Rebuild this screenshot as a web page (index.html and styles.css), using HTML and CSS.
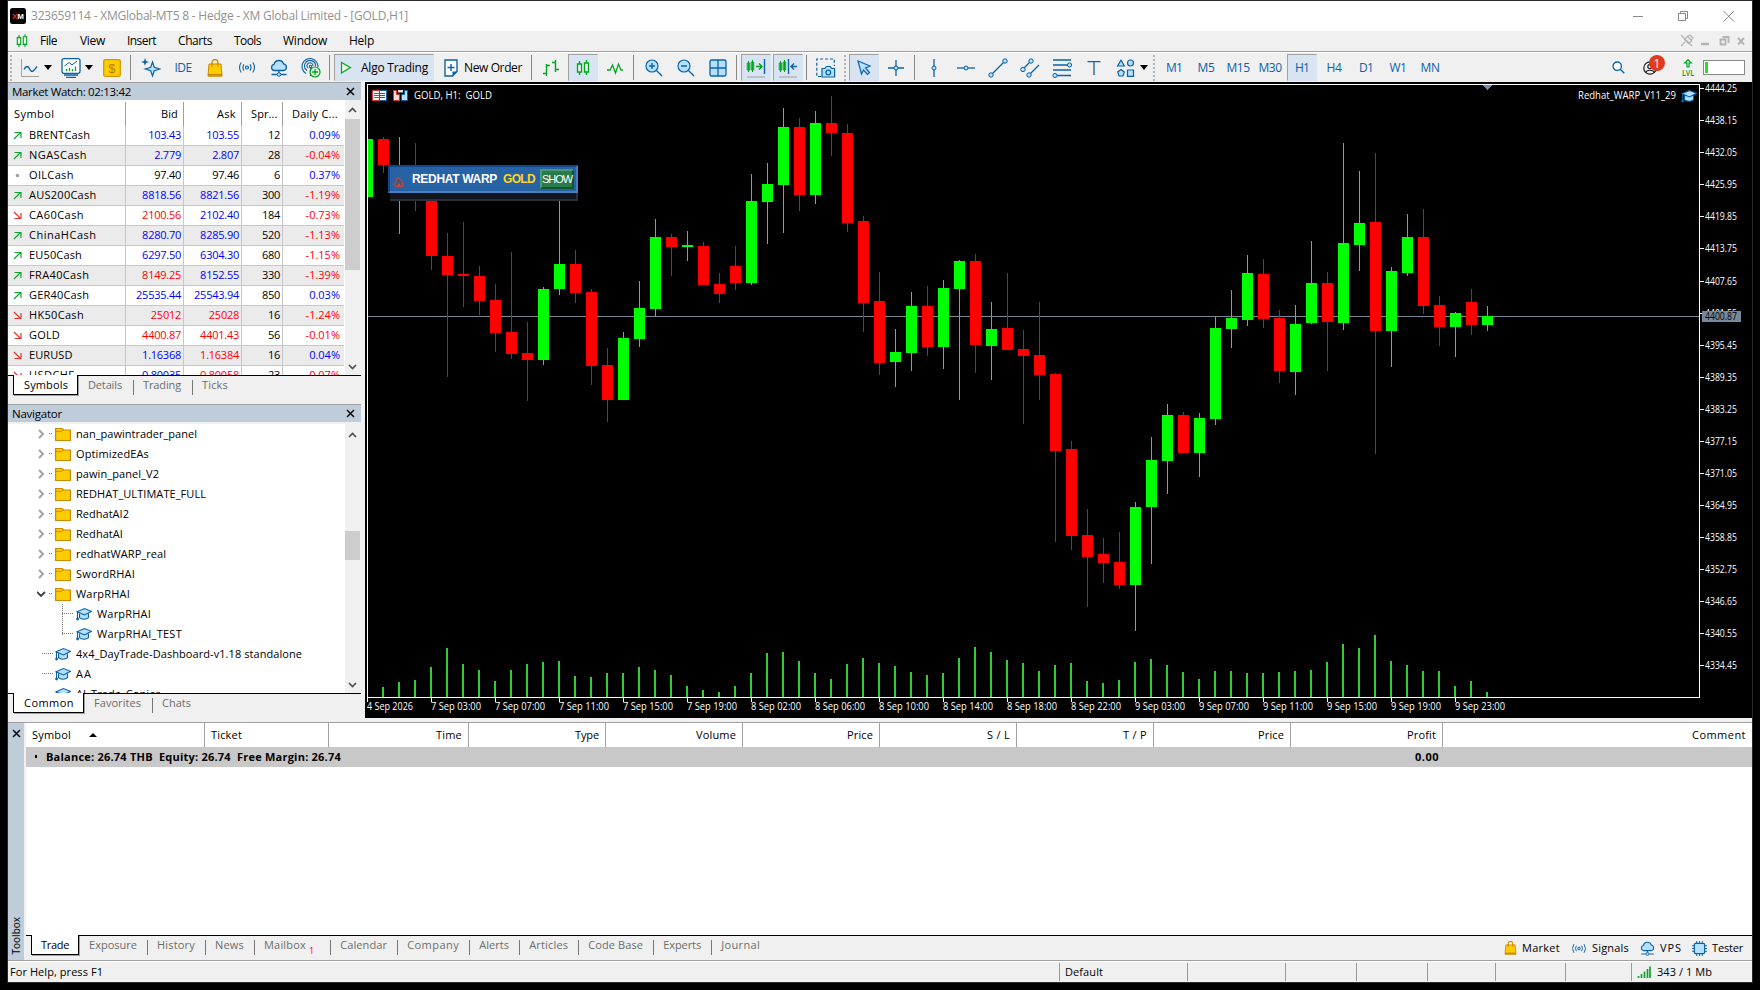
FILE: index.html
```html
<!DOCTYPE html>
<html lang="en">
<head>
<meta charset="utf-8">
<title>XMGlobal-MT5 8 - [GOLD,H1]</title>
<link rel="stylesheet" href="styles.css">
</head>
<body>
<svg class="defs" width="0" height="0">
  <symbol id="cap" viewBox="0 0 16 14"><path d="M3.500 6.500v4.200c2 2 7 2 9 0V6.500" fill="#b5e0ff" stroke="#0b62a8" stroke-width="1.100"/><path d="M1 4.800 8.500 1.500 15.500 4.300 8.500 8z" fill="#b5e0ff" stroke="#0b62a8" stroke-width="1.100"/><path d="M1.500 5v6.500" stroke="#0b62a8" stroke-width="1.100"/><circle cx="1.600" cy="12" r="1.400" fill="#0b62a8"/></symbol>
  <symbol id="folder" viewBox="0 0 16 14"><path d="M.600 1.500h6.500l1.500 1.500h6.800v10.500H.600z" fill="#fc0" stroke="#c98a00" stroke-width="1.200"/><path d="M.600 4.300h6.200l1.400-1.300" fill="none" stroke="#c98a00"/></symbol>
  <symbol id="bag" viewBox="0 0 16 18"><path d="M5 7V3.500a3 3 0 0 1 6 0V7" fill="none" stroke="#c98a00" stroke-width="1.300"/><path d="M2 5h12l1 12.200H1z" fill="#fc0" stroke="#c98a00" stroke-width="1"/><path d="M1.200 15.800h13.600" stroke="#c98a00" stroke-width="1.800"/><path d="M5 8V4M11 8V4" stroke="#c98a00"/></symbol>
  <symbol id="signal" viewBox="0 0 20 14"><g fill="none" stroke="#0b62a8" stroke-width="1.200"><circle cx="10" cy="7" r="1.700" fill="#b5e0ff"/><path d="M6.700 3.500q-2.400 3.500 0 7M13.300 3.500q2.400 3.500 0 7M3.600 1.500q-3.800 5.500 0 11M16.400 1.500q3.800 5.500 0 11"/></g></symbol>
  <symbol id="cloud" viewBox="0 0 18 18"><path d="M4 11.500a3.200 3.200 0 0 1 0-6.200 5 5 0 0 1 9.600-.4 3.400 3.400 0 0 1 .4 6.600z" fill="#b5e0ff" stroke="#0b62a8" stroke-width="1.300"/><path d="M9 11.500v3M1.500 15.500h5.500M11 15.500h5.500" stroke="#0b62a8" stroke-width="1.300"/><circle cx="9" cy="15.500" r="1.800" fill="#b5e0ff" stroke="#0b62a8"/></symbol>
  <symbol id="candles" viewBox="0 0 14 16"><path d="M3.500 1v3M3.500 12v3M10.500 0v3M10.500 12v3" stroke="#00a321" stroke-width="1.300"/><path d="M1.500 4h4v8h-4zM8.500 3h4v9h-4z" fill="#e4f8e0" stroke="#00a321" stroke-width="1.300"/></symbol>
</svg>
<div class="window">
  <header class="titlebar">
    <svg class="logo" width="16" height="16" viewBox="0 0 16 16"><rect width="16" height="16" rx="2.500"/><text x="2" y="11" textLength="12" lengthAdjust="spacingAndGlyphs" class="logotext"><tspan fill="#e22">X</tspan>M</text></svg>
    <span class="title" data-w="377">323659114 - XMGlobal-MT5 8 - Hedge - XM Global Limited - [GOLD,H1]</span>
    <svg class="winbtns" width="104" height="14" viewBox="0 0 104 14"><g fill="none" stroke="#888"><path d="M1 7.500h10M46.500 4.500h7v7h-7zM48.500 4V2.500h7v7H54M91.500 2l10.500 10.500M102 2 91.500 12.500"/></g></svg>
  </header>
  <nav class="menubar">
    <svg class="menuicon" width="12" height="14"><use href="#candles"/></svg>
    <span class="m1" data-w="17">File</span><span class="m2" data-w="25">View</span><span class="m3" data-w="29">Insert</span><span class="m4" data-w="34">Charts</span><span class="m5" data-w="27">Tools</span><span class="m6" data-w="44">Window</span><span class="m7" data-w="25">Help</span>
    <svg class="mdibtns" width="68" height="14" viewBox="0 0 68 14"><g fill="none" stroke="#b3b3b3"><path d="M1 1l11 11M1 12l4-4M4 5l5 5M7 2l5 5M5 5l3-3M9 9l3-2M8 2l2-1 3 3-2 2" stroke-width="1.200"/><path d="M21 10h8" stroke-width="2.400"/><path d="M40.500 5.500h5v5h-5zM42.500 3h6v6" stroke-width="1.800"/><path d="M58 4l6 6.500M64 4l-6 6.500" stroke-width="2"/></g></svg>
  </nav>
  <div class="toolbar">
    <i class="grip first"></i>
    <div class="drop"><svg width="20" height="20" viewBox="0 0 20 20"><path d="M1.500 1v17.500H19" fill="none" stroke="#a0a0a0"/><path d="M4 11.500c2-4 4-4 6 0s4 1 7-3" fill="none" stroke="#0b62a8" stroke-width="1.400"/></svg><b class="caret"></b></div>
    <div class="drop"><svg width="20" height="20" viewBox="0 0 20 20"><rect x="1" y=".7" width="18" height="14.600" rx="2" fill="#fff" stroke="#0b62a8" stroke-width="1.300"/><path d="M3.500 8 8 4.500l3 2.500 5-4" fill="none" stroke="#0b62a8"/><path d="M5.500 13v-2M8.500 13v-3M11.500 13v-2M14.500 13V8.500" stroke="#00a321" stroke-width="1.300"/><path d="M3 17h14M5 19.300h10" stroke="#0b62a8" stroke-width="1.300"/></svg><b class="caret"></b></div>
    <div class="btn"><svg width="18" height="18" viewBox="0 0 18 18"><rect x=".7" y=".7" width="16.600" height="16.600" rx="1.500" fill="#fc0" stroke="#d29a00" stroke-width="1.300"/><text x="5.200" y="14" class="dollar">$</text></svg></div>
    <i class="sep gap"></i>
    <div class="btn"><svg width="20" height="20" viewBox="0 0 20 20"><path d="M11.500 4 13.300 9.200 18.800 11 13.300 12.800 11.500 18 9.700 12.800 4.200 11 9.700 9.200z" fill="#b5e0ff" stroke="#0b62a8" stroke-width="1.200"/><path d="M4 0l1 3 3 1-3 1-1 3-1-3-3-1 3-1z" fill="#0b62a8"/></svg></div>
    <div class="btn blue"><span data-w="17">IDE</span></div>
    <div class="btn"><svg width="16" height="18"><use href="#bag"/></svg></div>
    <div class="btn"><svg width="18" height="13"><use href="#signal"/></svg></div>
    <div class="btn"><svg width="18" height="18"><use href="#cloud"/></svg></div>
    <div class="btn"><svg width="20" height="20" viewBox="0 0 20 20"><g fill="none" stroke="#0b62a8" stroke-width="1.100"><path d="M5 15.500A8 8 0 1 1 17 9M6 12.500a5.500 5.500 0 1 1 8.500-4M7 10a3 3 0 1 1 5-2"/><circle cx="9.500" cy="8.500" r="1.200"/><path d="M9.500 9v9"/></g><circle cx="14" cy="14" r="5" fill="#e6f9e4" stroke="#00a321" stroke-width="1.200"/><path d="M14 11v6M11 14h6" stroke="#00a321" stroke-width="1.300"/></svg></div>
    <i class="sep"></i>
    <div class="btn algo on"><svg width="12" height="14" viewBox="0 0 12 14"><path d="M1.500 1.500 10.500 6.500 1.500 12z" fill="#e6f9e4" stroke="#00a321" stroke-width="1.200"/></svg><span data-w="67">Algo Trading</span></div>
    <div class="btn neworder"><svg width="14" height="18" viewBox="0 0 14 18"><path d="M1 1h12v11.500L8.500 17H1z" fill="#fff" stroke="#0b62a8" stroke-width="1.400"/><path d="M13 12.500H8.500V17z" fill="#0b62a8"/><path d="M7 5v7M3.500 8.500h7" stroke="#0b62a8" stroke-width="1.400"/></svg><span data-w="58">New Order</span></div>
    <i class="sep"></i>
    <div class="btn"><svg width="18" height="18" viewBox="0 0 18 18"><path d="M4.500 5v12M1 14.500h3.500M4.500 6.500H8M13.500 1v12M10 3.500h3.500M13.500 10.500H17" stroke="#00a321" stroke-width="1.400"/></svg></div>
    <div class="btn on"><svg width="14" height="16"><use href="#candles"/></svg></div>
    <div class="btn"><svg width="18" height="14" viewBox="0 0 18 14"><path d="M1 9h3l2.500-5 3 8 3-9 2.500 6h2" fill="none" stroke="#00a321" stroke-width="1.300"/></svg></div>
    <i class="sep gap"></i>
    <div class="btn"><svg width="18" height="18" viewBox="0 0 18 18"><circle cx="7" cy="7" r="6" fill="#b5e0ff" stroke="#0b62a8" stroke-width="1.200"/><path d="M11.500 11.500 17 17M4 7h6M7 4v6" stroke="#0b62a8" stroke-width="1.400"/></svg></div>
    <div class="btn"><svg width="18" height="18" viewBox="0 0 18 18"><circle cx="7" cy="7" r="6" fill="#b5e0ff" stroke="#0b62a8" stroke-width="1.200"/><path d="M11.500 11.500 17 17M4 7h6" stroke="#0b62a8" stroke-width="1.400"/></svg></div>
    <div class="btn"><svg width="18" height="18" viewBox="0 0 18 18"><rect x="1" y="1" width="16" height="16" rx="1.500" fill="#b5e0ff" stroke="#0b62a8" stroke-width="1.300"/><path d="M9 1v16M1 9h16" stroke="#0b62a8" stroke-width="1.300"/></svg></div>
    <i class="sep"></i>
    <div class="btn on"><svg width="20" height="20" viewBox="0 0 20 20"><path d="M2.500 3v11M6.500 2v12M1.300 5h2.400v7H1.300zM5.300 4h2.400v8H5.300z" fill="#e4f8e0" stroke="#00a321"/><path d="M10 8.500h6M13 5.500l3 3-3 3" fill="none" stroke="#00a321" stroke-width="1.400"/><path d="M18.500 1v15" stroke="#0b62a8" stroke-width="1.400"/><path d="M1 19h18" stroke="#a0a0a0"/></svg></div>
    <div class="btn on"><svg width="20" height="20" viewBox="0 0 20 20"><path d="M2.500 3v11M6.500 2v12M1.300 5h2.400v7H1.300zM5.300 4h2.400v8H5.300z" fill="#e4f8e0" stroke="#00a321"/><path d="M10.500 1v15M13 8.500h6M16 5.500l-3 3 3 3" fill="none" stroke="#0b62a8" stroke-width="1.400"/><path d="M1 19h18" stroke="#a0a0a0"/></svg></div>
    <i class="sep"></i>
    <div class="btn"><svg width="20" height="20" viewBox="0 0 20 20"><path d="M5 18.500H.800V1h17.500v7" fill="none" stroke="#0b62a8" stroke-width="1.200" stroke-dasharray="3 2"/><path d="M6 10.500h3l1.300-2h4l1.300 2h3v8.500H6z" fill="#b5e0ff" stroke="#0b62a8" stroke-width="1.200"/><circle cx="12.300" cy="14.500" r="2.300" fill="#b5e0ff" stroke="#0b62a8" stroke-width="1.300"/></svg></div>
    <i class="grip"></i>
    <div class="btn on"><svg width="18" height="18" viewBox="0 0 18 18"><path d="M3 2l12 5-4.500 2 4 4.500-2 2-4-4.500L6.500 15z" fill="#b5e0ff" stroke="#0b62a8" stroke-width="1.200"/></svg></div>
    <div class="btn"><svg width="18" height="18" viewBox="0 0 18 18"><path d="M9 1v16M1 9h16" stroke="#0b62a8" stroke-width="1.300"/><circle cx="9" cy="9" r="2" fill="#b5e0ff" stroke="#0b62a8"/></svg></div>
    <i class="sep"></i>
    <div class="btn"><svg width="18" height="18" viewBox="0 0 18 18"><path d="M9 0v18" stroke="#0b62a8" stroke-width="1.300"/><circle cx="9" cy="9" r="2" fill="#b5e0ff" stroke="#0b62a8"/></svg></div>
    <div class="btn"><svg width="20" height="18" viewBox="0 0 20 18"><path d="M1 9h18" stroke="#0b62a8" stroke-width="1.300"/><circle cx="10" cy="9" r="2" fill="#b5e0ff" stroke="#0b62a8"/></svg></div>
    <div class="btn"><svg width="20" height="20" viewBox="0 0 20 20"><path d="M3 17 17 3" stroke="#0b62a8" stroke-width="1.300"/><g fill="#b5e0ff" stroke="#0b62a8"><circle cx="3" cy="17" r="2.200"/><circle cx="17" cy="3" r="2.200"/></g></svg></div>
    <div class="btn"><svg width="20" height="20" viewBox="0 0 20 20"><path d="M3 11l8-8M9 17 19 7" stroke="#0b62a8" stroke-width="1.300"/><g fill="#b5e0ff" stroke="#0b62a8"><circle cx="3" cy="11.500" r="2.200"/><circle cx="11" cy="3" r="2.200"/><circle cx="9" cy="17" r="2.200"/></g></svg></div>
    <div class="btn"><svg width="20" height="20" viewBox="0 0 20 20"><path d="M1 2h18M1 7h16M1 12h18M3 17.500h16" stroke="#0b62a8" stroke-width="1.300"/><g fill="#b5e0ff" stroke="#0b62a8"><circle cx="17.500" cy="7" r="2.100"/><circle cx="3" cy="17.500" r="2.100"/></g></svg></div>
    <div class="btn"><svg width="14" height="16" viewBox="0 0 14 16"><path d="M.500 1.700h13M7 1.700V15" stroke="#0b62a8" stroke-width="1.300"/></svg></div>
    <div class="drop"><svg width="20" height="20" viewBox="0 0 20 20"><g fill="#b5e0ff" stroke="#0b62a8" stroke-width="1.200"><path d="M5 2.200 8.400 8H1.600zM11.500 12h6v6.300h-6z"/><circle cx="14.500" cy="5" r="3"/><path d="M5 11.500 8.300 14 7 18H3L1.700 14z"/></g></svg><b class="caret"></b></div>
    <i class="grip wide"></i>
    <div class="btn blue"><span data-w="16">M1</span></div><div class="btn blue"><span data-w="17">M5</span></div><div class="btn blue"><span data-w="23">M15</span></div><div class="btn blue"><span data-w="23">M30</span></div><div class="btn blue on"><span data-w="14">H1</span></div><div class="btn blue"><span data-w="15">H4</span></div><div class="btn blue"><span data-w="14">D1</span></div><div class="btn blue"><span data-w="17">W1</span></div><div class="btn blue"><span data-w="19">MN</span></div>
    <div class="tray">
      <svg width="13" height="13" viewBox="0 0 13 13"><circle cx="5.200" cy="5.200" r="4.200" fill="#fff" stroke="#0b62a8" stroke-width="1.300"/><path d="M8.300 8.300 12.300 12.300" stroke="#0b62a8" stroke-width="1.300"/></svg>
      <div class="user"><svg width="14" height="14" viewBox="0 0 14 14"><g fill="none" stroke="#222" stroke-width="1.200"><circle cx="7" cy="7" r="6.200"/><circle cx="7" cy="5.500" r="2.200"/><path d="M2.800 11.500c1-3 7.400-3 8.400 0"/></g></svg><span class="badge">1</span></div>
      <svg class="lvl" width="14" height="18" viewBox="0 0 14 18"><path d="M7 .800 10.300 4H8v4H6V4H3.700z" fill="#e4f8e0" stroke="#00a321" stroke-width="1.200"/><text x="1" y="17" textLength="12" lengthAdjust="spacingAndGlyphs" class="lvltext">LVL</text></svg>
      <div class="meter"><i></i></div>
    </div>
  </div>
  <div class="middle">
    <aside class="side">
      <section class="panel watch">
        <h2><span data-w="119">Market Watch: 02:13:42</span><svg width="9" height="9" viewBox="0 0 9 9"><path d="M1 1l7 7M8 1 1 8" stroke="#000" stroke-width="1.500"/></svg></h2>
        <div class="body">
          <div class="list" id="quotes">
            <div class="q head"><span><b data-w="39">Symbol</b></span><span><b data-w="16">Bid</b></span><span><b data-w="18">Ask</b></span><span><b data-w="25">Spr...</b></span><span><b data-w="46">Daily C...</b></span></div>
          </div>
          <div class="scroll"><svg width="15" height="18" viewBox="0 0 15 18"><path d="M4 11l3.500-3.500L11 11" fill="none" stroke="#505050" stroke-width="1.700"/></svg><i class="thumb t1"></i><svg class="down" width="15" height="18" viewBox="0 0 15 18"><path d="M4 8l3.500 3.500L11 8" fill="none" stroke="#505050" stroke-width="1.700"/></svg></div>
        </div>
        <div class="tabs"><span class="tab active"><b data-w="44">Symbols</b></span><span class="tab"><b data-w="34">Details</b></span><span class="tab"><b data-w="38">Trading</b></span><span class="tab"><b data-w="26">Ticks</b></span></div>
      </section>
      <section class="panel navigator">
        <h2><span data-w="50">Navigator</span><svg width="9" height="9" viewBox="0 0 9 9"><path d="M1 1l7 7M8 1 1 8" stroke="#000" stroke-width="1.500"/></svg></h2>
        <div class="body">
          <div class="list tree" id="tree"></div>
          <div class="scroll"><svg width="15" height="18" viewBox="0 0 15 18"><path d="M4 11l3.500-3.500L11 11" fill="none" stroke="#505050" stroke-width="1.700"/></svg><i class="thumb t2"></i><svg class="down" width="15" height="18" viewBox="0 0 15 18"><path d="M4 8l3.500 3.500L11 8" fill="none" stroke="#505050" stroke-width="1.700"/></svg></div>
        </div>
        <div class="tabs"><span class="tab active"><b data-w="50">Common</b></span><span class="tab"><b data-w="47">Favorites</b></span><span class="tab"><b data-w="29">Chats</b></span></div>
      </section>
    </aside>
    <main class="chart">
      <svg id="chart" width="1387" height="636" viewBox="365 82 1387 636" shape-rendering="crispEdges"></svg>
      <div class="warp">
        <div class="warpbar"><svg width="10" height="13" viewBox="0 0 10 13"><path d="M1 11C0 7 3 6 3 3c3-1 6 3 6 8q-4 2-8 0z" fill="#4a5578" stroke="#e8432e" stroke-width="1"/><path d="M3 11 5 8l2 3z" fill="#e8432e"/></svg><b class="name" data-w="85">REDHAT WARP</b><b class="sym" data-w="32">GOLD</b><span class="show"><b data-w="30">SHOW</b></span></div>
        <div class="warpfoot"></div>
      </div>
    </main>
  </div>
  <section class="toolbox">
    <div class="strip"><svg width="9" height="9" viewBox="0 0 9 9"><path d="M1 1l7 7M8 1 1 8" stroke="#000" stroke-width="1.500"/></svg><span>Toolbox</span></div>
    <div class="trade">
      <div class="cols"><span><b data-w="39">Symbol</b><i class="asc"></i></span><span><b data-w="31">Ticket</b></span><span><b data-w="26">Time</b></span><span><b data-w="24">Type</b></span><span><b data-w="40">Volume</b></span><span><b data-w="26">Price</b></span><span><b data-w="23">S / L</b></span><span><b data-w="24">T / P</b></span><span><b data-w="26">Price</b></span><span><b data-w="29">Profit</b></span><span><b data-w="54">Comment</b></span></div>
      <div class="balance"><i></i><b data-w="295">Balance: 26.74 THB  Equity: 26.74  Free Margin: 26.74</b><b class="sum" data-w="24">0.00</b></div>
      <div class="blank"></div>
      <div class="tabs">
        <span class="tab active"><b data-w="28">Trade</b></span><span class="tab"><b data-w="48">Exposure</b></span><span class="tab"><b data-w="38">History</b></span><span class="tab"><b data-w="29">News</b></span><span class="tab mail"><b data-w="42">Mailbox</b><sub>1</sub></span><span class="tab"><b data-w="47">Calendar</b></span><span class="tab"><b data-w="52">Company</b></span><span class="tab"><b data-w="30">Alerts</b></span><span class="tab"><b data-w="39">Articles</b></span><span class="tab"><b data-w="55">Code Base</b></span><span class="tab"><b data-w="38">Experts</b></span><span class="tab"><b data-w="39">Journal</b></span>
        <div class="links">
          <svg width="13" height="14"><use href="#bag"/></svg><b data-w="38">Market</b>
          <svg class="l2" width="16" height="11"><use href="#signal"/></svg><b data-w="37">Signals</b>
          <svg class="l3" width="15" height="15"><use href="#cloud"/></svg><b data-w="22">VPS</b>
          <svg class="l4" width="15" height="15" viewBox="0 0 16 16"><path d="M5 0v16M8 0v16M11 0v16M0 5h16M0 8h16M0 11h16" stroke="#0b62a8"/><rect x="2.500" y="2.500" width="11" height="11" rx="1.500" fill="#b5e0ff" stroke="#0b62a8" stroke-width="1.300"/></svg><b data-w="31">Tester</b>
        </div>
      </div>
    </div>
  </section>
  <footer class="status"><span><b data-w="93">For Help, press F1</b></span><span><b data-w="38">Default</b></span><span></span><span></span><span></span><span></span><span></span><span></span><span class="net"><svg width="14" height="13" viewBox="0 0 14 13"><path d="M1.500 10v2M4.500 8v4M7.500 5.500V12M10.500 3v9M13 .500V12" stroke="#12a32e" stroke-width="1.700"/></svg><b data-w="55">343 / 1 Mb</b></span></footer>
</div>
<script src="app.js"></script>
</body>
</html>
```

FILE: styles.css
```css
* { box-sizing: border-box; }
body { margin: 0; width: 1760px; height: 990px; overflow: hidden; background: #000; font: 11px/14px "Open Sans", "Noto Sans", sans-serif; color: #000; }
b { font-weight: 400; white-space: pre; display: inline-block; }
svg { display: block; flex: none; }
.defs { position: absolute; }
[data-w] { display: inline-block; white-space: pre; }
.window { width: 1744px; height: 981px; margin: 1px 0 0 8px; background: #f0f0f0; display: flex; flex-direction: column; outline: 1px solid #2b2b2b; }

.titlebar { height: 30px; background: #fff; display: flex; align-items: center; padding-left: 2px; font-size: 12px; color: #919191; flex: none; }
.title { margin-left: 5px; }
.logotext { font: bold 8px "Liberation Sans", sans-serif; fill: #fff; }
.winbtns { margin-left: auto; margin-right: 16px; }

.menubar { height: 21px; flex: none; display: flex; align-items: center; border-bottom: 1px solid #a0a0a0; padding-left: 8px; font-size: 12px; }
.m1 { margin-left: 12px; } .m2 { margin-left: 23px; } .m3 { margin-left: 22px; } .m4 { margin-left: 22px; }
.m5 { margin-left: 22px; } .m6 { margin-left: 22px; } .m7 { margin-left: 22px; }
.mdibtns { margin-left: auto; margin-right: 4px; }

.toolbar { height: 30px; flex: none; display: flex; align-items: center; border-top: 1px solid #fff; font-size: 12px; }
.grip { width: 6px; height: 26px; flex: none; background: repeating-linear-gradient(#b4b4b4 0 2px, transparent 2px 4px) 2px 0 / 2px 100% no-repeat; }
.grip.wide { width: 7px; background-position-x: 2px; }
.sep { width: 6px; height: 25px; flex: none; background: linear-gradient(#888, #888) 2px 0 / 1px 100% no-repeat; }
.sep.gap { width: 7px; }
.drop { width: 41px; flex: none; display: flex; align-items: center; padding-left: 6px; }
.caret { width: 8px; border: 4px solid transparent; border-top: 5px solid #000; border-bottom: 0; margin-left: 4px; }
.btn { width: 30px; height: 27px; margin: 0 1px; flex: none; display: flex; align-items: center; justify-content: center; border: 1px solid transparent; }
.btn.on { background: #d8e4f1; border-color: #a0a0a0 #d8e4f1 #d8e4f1 #a0a0a0; }
.blue { color: #0b62a8; }
.algo { width: 100px; gap: 9px; }
.algo span, .neworder span { padding-top: 1px; }
.neworder { width: 92px; gap: 6px; justify-content: flex-start; padding-left: 7px; }
.dollar { font: 13px "Liberation Sans", sans-serif; fill: #b97a00; }
.tray { margin-left: auto; display: flex; align-items: center; padding-right: 7px; }
.user { position: relative; margin-left: 18px; }
.badge { position: absolute; left: 6px; top: -6px; width: 16px; height: 16px; border-radius: 50%; background: #e03a1e; color: #fff; font-size: 13px; line-height: 16px; text-align: center; }
.lvl { margin-left: 24px; margin-right: 8px; }
.lvltext { font: 600 9px "Open Sans", sans-serif; fill: #00a321; }
.meter { width: 42px; height: 15px; border: 1px solid #888; background: #fff; padding: 1px; }
.meter i { display: block; width: 3px; height: 11px; background: #2fdc2f; }

.middle { display: flex; height: 636px; flex: none; }
.side { width: 357px; padding-right: 4px; }
.panel { display: flex; flex-direction: column; }
.watch { height: 322px; }
.navigator { height: 314px; }
.panel h2 { margin: 0; height: 18px; flex: none; background: #bfcddb; border-top: 1px solid #a0a0a0; display: flex; align-items: center; justify-content: space-between; padding: 0 6px 0 4px; font-size: 11.500px; font-weight: 400; }
.panel .body { display: flex; overflow: hidden; flex: none; }
.watch .body { height: 275px; }
.navigator .body { height: 271px; border-top: 2px solid #f0f0f0; }
.list { width: 337px; background: #fff; overflow: hidden; }
.watch .list { padding-top: 2px; }
.scroll { width: 16px; display: flex; flex-direction: column; padding-top: 2px; background: #f0f0f0; }
.watch .scroll { padding-top: 1px; }
.thumb { width: 15px; background: #cdcdcd; display: block; }
.t1 { height: 151px; }
.t2 { height: 29px; margin-top: 87px; }
.down { margin-top: auto; }
.q { display: grid; grid-template-columns: 118px 58px 58px 41px 61px; height: 20px; width: 336px; }
.q > span { border-right: 1px solid #c6c6c6; border-bottom: 1px solid #c6c6c6; display: flex; align-items: center; justify-content: flex-end; padding: 0 2px 1px 0; letter-spacing: -0.250px; }
.q > span:last-child { border-right: 0; padding-right: 4px; letter-spacing: 0; }
.q > span:first-child { justify-content: flex-start; padding-left: 5px; gap: 7px; }
.q.head { height: 24px; }
.q.head > span { border-bottom: 0; border-right-color: #a0a0a0; padding-right: 6px; }
.q.head > span:first-child { padding-left: 6px; }
.q.odd > span { background: #ebebeb; }
.up { color: #00f; } .dn { color: #f00; }

.tabs { display: flex; border-top: 1px solid #000; height: 26px; flex: none; color: #6d6d6d; padding-left: 5px; }
.tab { height: 20px; padding: 0 10px 2px; display: flex; align-items: center; flex: none; position: relative; }
.side .tab { padding-right: 11px; }
.tab + .tab:not(.active + .tab)::before { content: ""; position: absolute; left: 0; top: 4px; width: 1px; height: 15px; background: #777; }
.tab.active, .side .tab.active { background: #fff; color: #000; border: 1px solid #000; border-top: 0; margin-top: -1px; padding: 0 9px; box-shadow: 1px 1px 0 #a0a0a0; }
.side .tab.active { padding-left: 10px; }

.tree { background: repeating-linear-gradient(#777 0 1px, #fff 1px 2px) 12px 0 / 1px 100% no-repeat #fff, repeating-linear-gradient(#777 0 1px, #fff 1px 2px) 33px 0 / 1px 100% no-repeat; }
.n { height: 20px; display: flex; align-items: center; padding: 0 0 1px 29px; }
.n .tw { background: #fff; padding: 3px 0; }
.n .dots { height: 1px; margin-right: 2px; background: repeating-linear-gradient(90deg, #777 0 1px, #fff 1px 2px); }
.n.dir .dots { width: 4px; margin-left: 3px; }
.n.ea { padding-left: 34px; } .n.ea .dots { width: 11px; }
.n.child { padding-left: 54px; background: repeating-linear-gradient(#777 0 1px, #fff 1px 2px) 54px 0 / 1px 100% no-repeat; }
.n.child.last { background-size: 1px 11px; }
.n.child .dots { width: 12px; }
.n b { margin-left: 5px; }

.chart { width: 1387px; background: #000; position: relative; }
#chart text { font: 10px "Open Sans", "Noto Sans", sans-serif; fill: #fff; white-space: pre; }
#chart text.price { fill: #000; }
.warp { position: absolute; left: 23px; top: 83px; width: 190px; }
.warpbar { height: 28px; border: 2px solid; border-color: #12458a #447fc0 #447fc0 #12458a; background: #2763a4; display: flex; align-items: center; padding-left: 4px; font-family: "Liberation Sans", sans-serif; font-size: 12px; color: #fff; }
.warpbar svg { margin-top: 4px; }
.warpbar b.name { font-weight: 700; margin-left: 8px; }
.warpbar b.sym { font-weight: 700; color: #ffd51e; margin-left: 6px; }
.show { width: 34px; height: 20px; margin-left: 5px; background: #297a4c; border: 2px solid; border-color: #4d9a70 #0e5530 #0e5530 #4d9a70; display: flex; align-items: center; font-size: 11px; }
.warpfoot { height: 8px; margin-left: 2px; background: #12151d; border-right: 2px solid #2c303b; border-bottom: 2px solid #2c303b; }

.toolbox { margin-top: 4px; height: 239px; flex: none; display: flex; border-top: 1px solid #a0a0a0; border-bottom: 1px solid #a0a0a0; }
.strip { width: 16px; background: #bfcddb; display: flex; flex-direction: column; align-items: center; justify-content: space-between; padding: 6px 0 6px; margin-right: 2px; }
.strip span { writing-mode: vertical-rl; transform: rotate(180deg); line-height: 16px; font-size: 10px; }
.trade { flex: 1; display: flex; flex-direction: column; }
.cols { height: 24px; background: #fff; display: grid; grid-template-columns: 179px 124px 140px 137px 137px 137px 137px 137px 137px 152px 1fr; }
.cols span { border-right: 1px solid #a0a0a0; display: flex; align-items: center; justify-content: flex-end; padding: 0 6px 1px; }
.cols span:nth-child(-n+2) { justify-content: flex-start; }
.cols span:last-child { border: 0; }
.asc { border: 4px solid transparent; border-top: 0; border-bottom: 4px solid #000; margin-left: 18px; }
.balance { height: 20px; background: #c8c8c8; display: flex; align-items: center; padding: 0 0 1px 9px; }
.balance i { width: 2px; height: 3px; background: #000; margin-right: 9px; }
.balance b { font-weight: 700; }
.sum { margin-left: 1074px; }
.blank { height: 168px; background: #fff; }
.trade .tabs { flex: 1; }
.mail sub { color: #f00; font-size: 9px; line-height: 9px; margin: 10px 6px 0 3px; }
.links { margin-left: auto; display: flex; align-items: center; color: #000; padding-right: 9px; }
.links b { margin-left: 5px; }
.links .l2 { margin-left: 11px; } .links .l3 { margin-left: 11px; } .links .l4 { margin-left: 10px; }

.status { flex: 1; display: grid; grid-template-columns: 1051px 128px 98px 71px 71px 68px 70px 66px 1fr; border-top: 1px solid #fff; padding: 1px 0; }
.status span { display: flex; align-items: center; padding-left: 5px; border-left: 1px solid #999; }
.status span:first-child { border: 0; padding-left: 2px; }
.status .net { gap: 6px; }
```

FILE: app.js
```js
// name, width, bid, ask, spread, daily change, trend, bid/ask colour
const quotes = [
  ['BRENTCash', 59, '103.43', '103.55', 12, '0.09%', 'u', 'uu'],
  ['NGASCash', 56, '2.779', '2.807', 28, '-0.04%', 'u', 'uu'],
  ['OILCash', 43, '97.40', '97.46', 6, '0.37%', '-', '--'],
  ['AUS200Cash', 65, '8818.56', '8821.56', 300, '-1.19%', 'u', 'uu'],
  ['CA60Cash', 53, '2100.56', '2102.40', 184, '-0.73%', 'd', 'du'],
  ['ChinaHCash', 65, '8280.70', '8285.90', 520, '-1.13%', 'u', 'uu'],
  ['EU50Cash', 51, '6297.50', '6304.30', 680, '-1.15%', 'u', 'uu'],
  ['FRA40Cash', 58, '8149.25', '8152.55', 330, '-1.39%', 'u', 'du'],
  ['GER40Cash', 58, '25535.44', '25543.94', 850, '0.03%', 'u', 'uu'],
  ['HK50Cash', 53, '25012', '25028', 16, '-1.24%', 'd', 'dd'],
  ['GOLD', 30, '4400.87', '4401.43', 56, '-0.01%', 'd', 'dd'],
  ['EURUSD', 42, '1.16368', '1.16384', 16, '0.04%', 'd', 'ud'],
  ['USDCHF', 44, '0.80035', '0.80058', 23, '-0.07%', 'd', 'ud']
];
const trend = {
  u: '<svg width="9" height="9"><path d="M1 8l6.500-6.500M1.500 1.500H8V7" fill="none" stroke="#12a32e" stroke-width="1.200"/></svg>',
  d: '<svg width="9" height="9"><path d="M1 1l6.500 6.500M1.500 7.500H8V2" fill="none" stroke="#e0342c" stroke-width="1.200"/></svg>',
  '-': '<svg width="9" height="9"><circle cx="4.500" cy="4.500" r="1.800" fill="#a0a0a0"/></svg>'
};
const cls = { u: 'up', d: 'dn', '-': '' };
document.getElementById('quotes').insertAdjacentHTML('beforeend', quotes.map((q, i) =>
  `<div class="q ${i % 2 ? 'odd' : ''}"><span>${trend[q[6]]}<b data-w="${q[1]}">${q[0]}</b></span>` +
  `<span class="${cls[q[7][0]]}">${q[2]}</span><span class="${cls[q[7][1]]}">${q[3]}</span><span>${q[4]}</span>` +
  `<span class="${q[5][0] === '-' ? 'dn' : 'up'}">${q[5]}</span></div>`).join(''));

const tree = [
  ['dir', 'nan_pawintrader_panel', 121], ['dir', 'OptimizedEAs', 73], ['dir', 'pawin_panel_V2', 83],
  ['dir', 'REDHAT_ULTIMATE_FULL', 130], ['dir', 'RedhatAI2', 53], ['dir', 'RedhatAI', 47],
  ['dir', 'redhatWARP_real', 90], ['dir', 'SwordRHAI', 59], ['dir open', 'WarpRHAI', 54],
  ['child', 'WarpRHAI', 54], ['child last', 'WarpRHAI_TEST', 85],
  ['ea', '4x4_DayTrade-Dashboard-v1.18 standalone', 226], ['ea', 'AA', 16], ['ea', 'AI_Trade_Copier', 84]
];
document.getElementById('tree').innerHTML = tree.map(([k, name, w]) => {
  const dir = k.startsWith('dir');
  const arrow = k.includes('open') ? '<path d="M0 3l4 4 4-4" stroke="#404040"' : '<path d="M2 1l4 4-4 4" stroke="#a0a0a0"';
  return `<div class="n ${k}">${dir ? `<div class="tw"><svg width="9" height="10" viewBox="0 0 9 10">${arrow} stroke-width="1.900" fill="none"/></svg></div>` : ''}` +
    `<i class="dots"></i><svg width="16" height="14"><use href="#${dir ? 'folder' : 'cap'}"/></svg><b data-w="${w}">${name}</b></div>`;
}).join('');

// colour, wick top, body top, body bottom, wick bottom (one entry per 16px step)
const bars = `G 139 139 197 197|R 137 139 165 173|G 137 170 190 234|R 143 170 190 211|R 190 190 256 270|R 233 256 275 377
R 222 274 276 307|R 266 276 301 315|R 284 300 333 352|R 252 332 354 359|R 322 353 360 401|G 287 289 360 365
G 190 264 289 295|R 250 264 293 303|R 289 292 366 385|R 348 365 400 422|G 332 338 400 400|G 281 308 339 347
G 219 237 309 317|R 234 237 247 276|G 231 245 247 261|R 242 246 285 285|R 273 284 294 303|R 246 266 283 290
G 174 201 283 285|G 163 184 202 244|G 108 127 185 233|R 118 127 195 211|G 111 123 195 204|R 96 123 133 156
R 124 133 223 232|R 216 221 303 332|R 272 301 363 375|G 329 352 362 387|G 292 306 353 371|R 286 306 347 356
G 280 288 347 369|G 260 261 289 400|R 254 261 345 373|G 302 329 346 380|R 273 328 350 350|R 330 349 356 424
R 302 355 375 400|R 373 374 451 542|R 441 449 536 550|R 509 535 557 607|R 538 554 563 583|R 532 562 585 589
G 502 507 585 631|G 437 460 507 564|G 404 415 461 494|R 412 415 453 453|G 413 418 453 477|G 317 328 419 425
G 290 318 329 348|G 255 273 320 326|R 259 274 319 328|R 310 318 371 383|G 305 324 372 395|G 241 283 323 324
R 272 283 322 371|G 143 243 323 330|G 171 223 245 271|R 153 222 331 454|G 267 271 331 367|G 214 237 273 276
R 209 237 306 314|R 296 305 327 346|G 312 313 327 357|R 289 302 325 335|G 306 316 325 331`.split(/[|\n]/);
const volume = [697, 687, 682, 680, 667, 648, 664, 670, 681, 670, 664, 662, 661, 676, 677, 673, 673, 667, 670, 675, 686,
  690, 692, 686, 673, 653, 652, 661, 673, 679, 664, 658, 663, 666, 672, 675, 673, 658, 647, 652, 660, 663, 671, 665, 663,
  681, 683, 680, 662, 659, 665, 672, 679, 671, 671, 673, 673, 672, 671, 670, 662, 644, 648, 635, 661, 665, 671, 671, 686, 681, 692];

const rect = (x, y, w, h, f) => `<rect x="${x}" y="${y}" width="${w}" height="${h}" fill="${f}"/>`;
const label = (x, y, w, t, c = '') => `<text x="${x}" y="${y}" textLength="${w}" lengthAdjust="spacingAndGlyphs" class="${c}">${t}</text>`;
let s = rect(368, 316, 1331, 1, '#778899');
s += '<clipPath id="plot"><path d="M368 85h1331v612H368z"/></clipPath><g clip-path="url(#plot)">';
bars.forEach((b, i) => {
  const [c, h, t, o, l] = b.trim().split(' ');
  const x = 367 + 16 * i, f = c === 'G' ? '#00ff00' : '#ff0000';
  s += rect(x, h, 1, l - h, f) + rect(x - 5, t, 11, o - t, f);
  s += rect(x - 1, volume[i], 2, 697 - volume[i], '#32cd32');
});
s += '</g>';
s += rect(367, 84, 1333, 1, '#fff') + rect(367, 84, 1, 618, '#fff') + rect(367, 697, 1333, 1, '#fff') + rect(1699, 84, 1, 614, '#fff');
[88, 120, 152, 184, 216, 248, 281, 313, 345, 377, 409, 441, 473, 505, 537, 569, 601, 633, 665].forEach((y, i) => {
  s += rect(1700, y, 4, 1, '#fff') + label(1705, y + 4, 32, (4444.25 - 6.1 * i).toFixed(2));
});
s += rect(1702, 311, 39, 11, '#778899') + label(1705, 320, 32, '4400.87', 'price');
['4 Sep 2026', '7 Sep 03:00', '7 Sep 07:00', '7 Sep 11:00', '7 Sep 15:00', '7 Sep 19:00', '8 Sep 02:00', '8 Sep 06:00',
  '8 Sep 10:00', '8 Sep 14:00', '8 Sep 18:00', '8 Sep 22:00', '9 Sep 03:00', '9 Sep 07:00', '9 Sep 11:00', '9 Sep 15:00',
  '9 Sep 19:00', '9 Sep 23:00'].forEach((t, i) => {
  s += rect(367 + 64 * i, 698, 1, 4, '#fff') + label(367 + 64 * i, 710, i ? 50 : 46, t);
});
s += '<path d="M1483 85h9l-4.500 5z" fill="#778899"/>';
s += label(414, 99, 78, 'GOLD, H1:  GOLD') + label(1578, 99, 98, 'Redhat_WARP_V11_29');
s += '<g shape-rendering="auto"><use href="#cap" x="1681" y="89" width="16" height="14"/>' +
  '<path d="M372.500 90.500h7v10h-7z" fill="#fff" stroke="#d9342b"/><path d="M379.500 90.500h7v10h-7z" fill="#fff" stroke="#0b62a8"/>' +
  '<path d="M374 93.500h5M374 95.500h5M374 97.500h5" stroke="#d9342b"/><path d="M380 93.500h5M380 95.500h5M380 97.500h5" stroke="#0b62a8"/>' +
  '<path d="M393.500 90.500h3v4h3v6h-6z" fill="#ffd9d4" stroke="#d9342b"/><path d="M407.500 90.500h-3v4h-3v6h6z" fill="#b5e0ff" stroke="#0b62a8"/>' +
  '<path d="M398 90h5v2.500h-5z" fill="#ddd"/></g>';
document.getElementById('chart').innerHTML = s;

document.querySelectorAll('[data-w]').forEach(el => {
  const w = el.getBoundingClientRect().width;
  el.style.letterSpacing = (el.dataset.w - w) / el.textContent.length + 'px';
});
document.querySelectorAll('[data-w]').forEach(el => { el.style.width = el.dataset.w + 'px'; });
```
